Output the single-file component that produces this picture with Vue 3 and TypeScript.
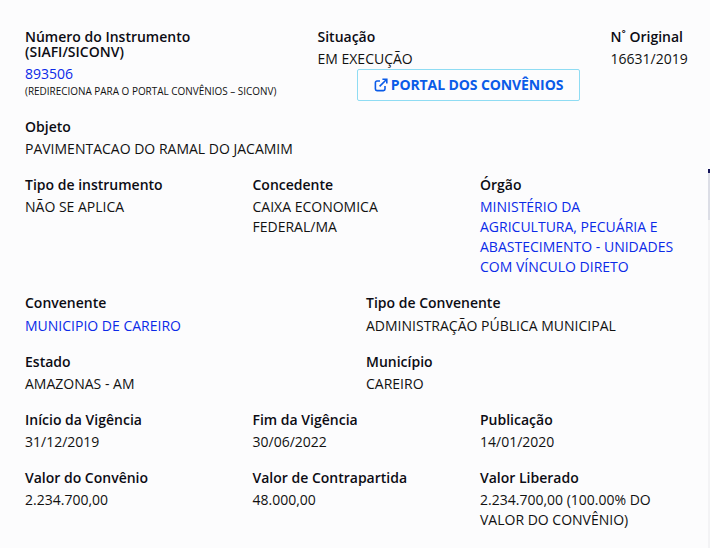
<script setup lang="ts">
const tipo = [
  { label: 'Tipo de instrumento', value: 'NÃO SE APLICA' },
  { label: 'Concedente', value: 'CAIXA ECONOMICA FEDERAL/MA' },
  { label: 'Órgão', value: 'MINISTÉRIO DA AGRICULTURA, PECUÁRIA E ABASTECIMENTO - UNIDADES COM VÍNCULO DIRETO', link: true },
];
const convenente = [
  { label: 'Convenente', value: 'MUNICIPIO DE CAREIRO', link: true },
  { label: 'Tipo de Convenente', value: 'ADMINISTRAÇÃO PÚBLICA MUNICIPAL' },
  { label: 'Estado', value: 'AMAZONAS - AM' },
  { label: 'Município', value: 'CAREIRO' },
];
const datas = [
  { label: 'Início da Vigência', value: '31/12/2019' },
  { label: 'Fim da Vigência', value: '30/06/2022' },
  { label: 'Publicação', value: '14/01/2020' },
  { label: 'Valor do Convênio', value: '2.234.700,00' },
  { label: 'Valor de Contrapartida', value: '48.000,00' },
  { label: 'Valor Liberado', value: '2.234.700,00 (100.00% DO VALOR DO CONVÊNIO)' },
];
</script>

<template>
  <main class="page">
    <section class="top">
      <div class="field numero">
        <h4 class="label tight">Número do Instrumento<br />(SIAFI/SICONV)</h4>
        <a class="value link">893506</a>
        <small class="note">(REDIRECIONA PARA O PORTAL CONVÊNIOS – SICONV)</small>
      </div>
      <div class="field situacao">
        <h4 class="label">Situação</h4>
        <p class="value">EM EXECUÇÃO</p>
        <a class="portal">
          <svg class="portal-icon" viewBox="0 0 14 14" width="14" height="14" fill="none" stroke="currentColor" stroke-width="1.6">
            <path d="M11 8v3a1.6 1.6 0 0 1-1.6 1.6H3A1.6 1.6 0 0 1 1.4 11V4.6A1.6 1.6 0 0 1 3 3h3" />
            <path d="M5.6 8.4 12 2M8.4 1.2h4.4v4.4" />
          </svg>
          PORTAL DOS CONVÊNIOS
        </a>
      </div>
      <div class="field original">
        <h4 class="label">N˚ Original</h4>
        <p class="value">16631/2019</p>
      </div>
    </section>

    <section class="field objeto">
      <h4 class="label">Objeto</h4>
      <p class="value">PAVIMENTACAO DO RAMAL DO JACAMIM</p>
    </section>

    <section class="grid three first">
      <div v-for="f in tipo" :key="f.label" class="field">
        <h4 class="label">{{ f.label }}</h4>
        <p class="value" :class="{ link: f.link }">{{ f.value }}</p>
      </div>
    </section>

    <section class="grid two">
      <div v-for="f in convenente" :key="f.label" class="field">
        <h4 class="label">{{ f.label }}</h4>
        <p class="value" :class="{ link: f.link }">{{ f.value }}</p>
      </div>
    </section>

    <section class="grid three">
      <div v-for="f in datas" :key="f.label" class="field">
        <h4 class="label">{{ f.label }}</h4>
        <p class="value">{{ f.value }}</p>
      </div>
    </section>
    <span class="scroll-line" />
    <span class="scroll-thumb" />
  </main>
</template>

<style>
html, body {
  margin: 0;
  background: #fcfcfd;
}
</style>

<style scoped>
.page {
  position: relative;
  box-sizing: border-box;
  width: 710px;
  height: 548px;
  overflow: hidden;
  padding: 27px 20px 0 25px;
  font-family: "Open Sans", sans-serif;
  font-size: 14px;
  line-height: 20px;
  color: #111;
}

.label {
  margin: 0 0 2px;
  font-size: 14px;
  font-weight: 600;
  line-height: 20px;
  color: #0c0c14;
}

.label.tight {
  line-height: 15px;
  margin-top: 2px;
  margin-bottom: 5px;
}

.value {
  margin: 0;
  display: block;
}

.link {
  color: #0b2ae8;
}

.note {
  display: block;
  font-size: 9.95px;
  line-height: 14px;
}

.top {
  display: flex;
}

.numero {
  width: 292.5px;
}

.situacao {
  width: 293px;
}

.original {
  flex: 1;
}

.portal {
  box-sizing: border-box;
  display: flex;
  align-items: center;
  justify-content: center;
  gap: 3px;
  width: 223px;
  height: 32px;
  margin: 0 0 0 39.5px;
  border: 1px solid #8fdcf3;
  border-radius: 2px;
  font-size: 14px;
  font-weight: 700;
  letter-spacing: -0.1px;
  color: #0a5be8;
}

.objeto {
  margin-top: 16px;
}

.grid {
  display: grid;
  margin-top: 16px;
  row-gap: 16px;
}

.three {
  grid-template-columns: 227.5px 227.5px 1fr;
}

.three .field {
  padding-right: 15px;
}

.two {
  grid-template-columns: 341px 1fr;
}

.two .field:nth-child(-n + 2) .label {
  margin-bottom: 3px;
}

.first {
  margin-top: 16px;
}

.scroll-line {
  position: absolute;
  right: 0;
  top: 173px;
  bottom: 0;
  width: 2px;
  background: #f3f3f5;
}

.scroll-thumb {
  position: absolute;
  right: 0;
  top: 169px;
  width: 2px;
  height: 51px;
  box-sizing: border-box;
  background: #dcdee6;
  border-top: 4px solid #14145a;
}
</style>
